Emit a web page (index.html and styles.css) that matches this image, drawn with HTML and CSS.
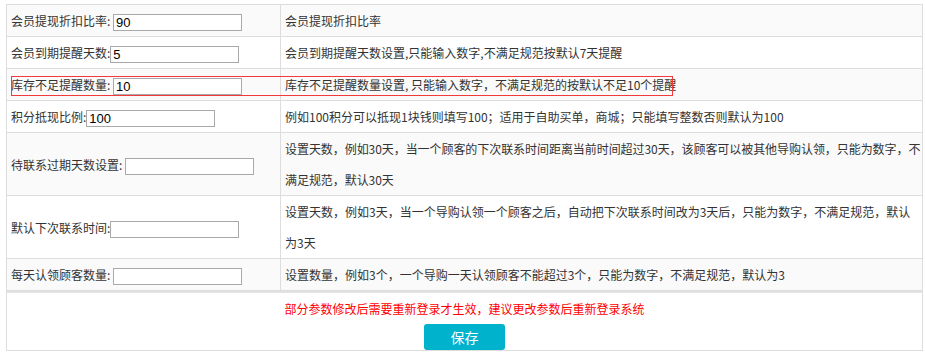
FILE: index.html
```html
<!DOCTYPE html>
<html lang="zh-CN">
  <head>
    <meta charset="UTF-8" />
    <meta name="viewport" content="width=device-width, initial-scale=1.0" />
    <title>参数设置</title>
    <link rel="stylesheet" href="styles.css">
  </head>
  <body>
    <div class="panel">
      <table class="config">
        <colgroup>
          <col class="col-name" />
          <col class="col-note" />
        </colgroup>
        <tr class="odd">
          <td class="name">会员提现折扣比率: <input type="text" value="90" /></td>
          <td class="note">会员提现折扣比率</td>
        </tr>
        <tr>
          <td class="name">会员到期提醒天数:<input type="text" value="5" /></td>
          <td class="note">会员到期提醒天数设置,只能输入数字,不满足规范按默认7天提醒</td>
        </tr>
        <tr class="odd">
          <td class="name">库存不足提醒数量: <input type="text" value="10" /></td>
          <td class="note">库存不足提醒数量设置, 只能输入数字，不满足规范的按默认不足10个提醒</td>
        </tr>
        <tr>
          <td class="name">积分抵现比例:<input type="text" value="100" /></td>
          <td class="note">例如100积分可以抵现1块钱则填写100；适用于自助买单，商城；只能填写整数否则默认为100</td>
        </tr>
        <tr class="odd">
          <td class="name">待联系过期天数设置: <input type="text" value="" /></td>
          <td class="note tight">设置天数，例如30天，当一个顾客的下次联系时间距离当前时间超过30天，该顾客可以被其他导购认领，只能为数字，不满足规范，默认30天</td>
        </tr>
        <tr>
          <td class="name">默认下次联系时间:<input type="text" value="" /></td>
          <td class="note">设置天数，例如3天，当一个导购认领一个顾客之后，自动把下次联系时间改为3天后，只能为数字，不满足规范，默认为3天</td>
        </tr>
        <tr class="odd">
          <td class="name">每天认领顾客数量: <input type="text" value="" /></td>
          <td class="note">设置数量，例如3个，一个导购一天认领顾客不能超过3个，只能为数字，不满足规范，默认为3</td>
        </tr>
      </table>
      <div class="foot">
        <p class="warn">部分参数修改后需要重新登录才生效，建议更改参数后重新登录系统</p>
        <button type="button" class="save">保存</button>
      </div>
      <span class="mark"></span>
    </div>
  </body>
</html>
```

FILE: styles.css
```css
* {
  font-family: "Noto Sans CJK SC", "Noto Sans", sans-serif;
}

body {
  margin: 0;
  background-color: #fff;
  color: #333;
  font-size: 12px;
}

.panel {
  position: relative;
  width: 917px;
  margin: 4px 0 0 6px;
}

.config {
  width: 917px;
  table-layout: fixed;
  border-collapse: collapse;
}

.col-name {
  width: 274px;
}

.config td {
  padding: 0 0 0 4px;
  border: 1px solid #ddd;
  line-height: 31px;
  vertical-align: middle;
  word-break: break-all;
}

/* the original font is a hair narrower, keep the wrap point the same */
.config td.tight {
  letter-spacing: -0.06px;
}

.config tr.odd td {
  background-color: #fafafa;
}

.config input[type="text"] {
  box-sizing: border-box;
  width: 129px;
  height: 17px;
  padding: 0 2px;
  margin: 0;
  border: 1px solid #a9a9a9;
  background-color: #fff;
  color: #000;
  font-family: "Liberation Sans", Arial, sans-serif;
  font-size: 13px;
  vertical-align: middle;
}

.foot {
  box-sizing: border-box;
  width: 917px;
  border: 1px solid #ddd;
  border-top-width: 2px;
  border-top-color: #e2e2e2;
  text-align: center;
}

.warn {
  margin: 0;
  line-height: 31px;
  color: #f00;
}

.save {
  display: block;
  width: 81px;
  height: 26px;
  margin: 0 auto;
  padding: 0;
  border: none;
  border-radius: 3px;
  background-color: #00b2cc;
  color: #fff;
  font-size: 14px;
  cursor: pointer;
}

.mark {
  position: absolute;
  left: 5px;
  top: 72px;
  width: 662px;
  height: 20px;
  box-sizing: border-box;
  border: 1px solid #f23a3a;
  pointer-events: none;
}
```
